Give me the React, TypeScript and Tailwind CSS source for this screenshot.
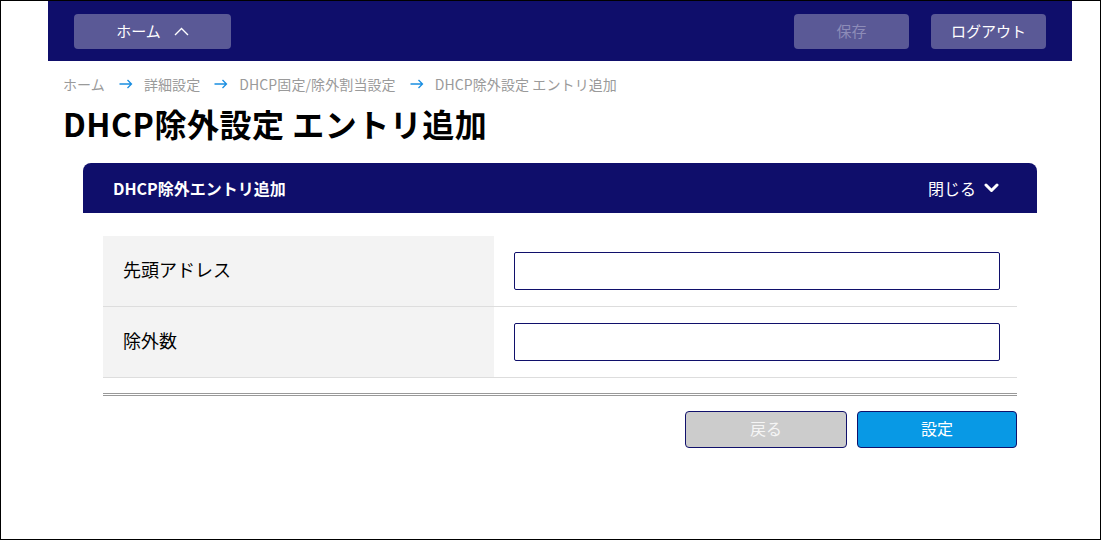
import React from "react";

function Arrow() {
  return (
    <svg width="14" height="10" viewBox="0 0 14 10" className="ml-[14px] mr-[11px] shrink-0">
      <path d="M0.5 5 H12.5 M8.5 1 L12.5 5 L8.5 9" fill="none" stroke="#1a8ee1" strokeWidth="1.3" />
    </svg>
  );
}

function Row({ label }: { label: string }) {
  return (
    <div className="flex border-b border-[#dddddd]">
      <div className="w-[391px] h-[70px] bg-[#f3f3f3] pl-[20px] pb-[4px] flex items-center text-[18px] text-black">
        {label}
      </div>
      <div className="flex-1 pl-[20px] flex items-center">
        <input
          type="text"
          className="w-[486px] h-[38px] border border-[#10106b] rounded-[2px] bg-white outline-none"
        />
      </div>
    </div>
  );
}

export default function App() {
  return (
    <div
      className="w-[1101px] h-[540px] border border-black bg-white overflow-hidden"
      style={{ fontFamily: '"Noto Sans CJK JP", "Noto Sans", sans-serif' }}
    >
      <div className="ml-[47px] w-[1024px]">
        {/* Header */}
        <div className="h-[60px] bg-[#0f0e6b] flex items-start pt-[13px] px-[26px]">
          <button className="w-[157px] h-[35px] rounded-[4px] bg-[#5a5996] flex items-center justify-center gap-[13px] text-white text-[15px]">
            <span>ホーム</span>
            <svg width="15" height="9" viewBox="0 0 15 9">
              <path d="M1 8 L7.5 1.5 L14 8" fill="none" stroke="white" strokeWidth="1.4" />
            </svg>
          </button>
          <button className="ml-auto w-[115px] h-[35px] rounded-[4px] bg-[#5a5996] flex items-center justify-center text-[#8d8cb8] text-[15px]">
            保存
          </button>
          <button className="ml-[22px] w-[115px] h-[35px] rounded-[4px] bg-[#5a5996] flex items-center justify-center text-white text-[15px]">
            ログアウト
          </button>
        </div>

        {/* Breadcrumb */}
        <div className="mt-[13px] px-[15px] h-[20px] flex items-center text-[14px] text-[#9a9a9a] leading-[20px] tracking-[0.1px]">
          <span>ホーム</span>
          <Arrow />
          <span>詳細設定</span>
          <Arrow />
          <span>DHCP固定/除外割当設定</span>
          <Arrow />
          <span>DHCP除外設定 エントリ追加</span>
        </div>

        {/* Title */}
        <h1 className="mt-[9px] px-[15px] h-[42px] leading-[40px] text-[32px] font-bold text-black tracking-[0.5px]">
          DHCP除外設定 エントリ追加
        </h1>

        {/* Panel */}
        <div className="mt-[18px] ml-[35px] w-[954px]">
          <div className="h-[50px] rounded-t-[8px] bg-[#0f0e6b] flex items-center pl-[30px] pr-[38px] text-white">
            <span className="text-[16px] font-bold">DHCP除外エントリ追加</span>
            <span className="ml-auto text-[16px]">閉じる</span>
            <svg width="15" height="10" viewBox="0 0 15 10" className="ml-[8px]">
              <path d="M2 2 L7.5 7.5 L13 2" fill="none" stroke="white" strokeWidth="3" strokeLinecap="round" strokeLinejoin="round" />
            </svg>
          </div>
          <div className="px-[20px] pt-[23px]">
            <Row label="先頭アドレス" />
            <Row label="除外数" />
            <div className="mt-[15px] border-t-[3px] border-double border-[#999999]" />
            <div className="mt-[15px] flex justify-end gap-[10px]">
              <button className="w-[162px] h-[37px] pb-[3px] rounded-[4px] border border-[#10106b] bg-[#cccccc] text-[#f5f5f5] text-[16px] flex items-center justify-center">
                戻る
              </button>
              <button className="w-[160px] h-[37px] pb-[3px] rounded-[4px] border border-[#10106b] bg-[#0899e5] text-white text-[16px] flex items-center justify-center">
                設定
              </button>
            </div>
          </div>
        </div>
      </div>
    </div>
  );
}
